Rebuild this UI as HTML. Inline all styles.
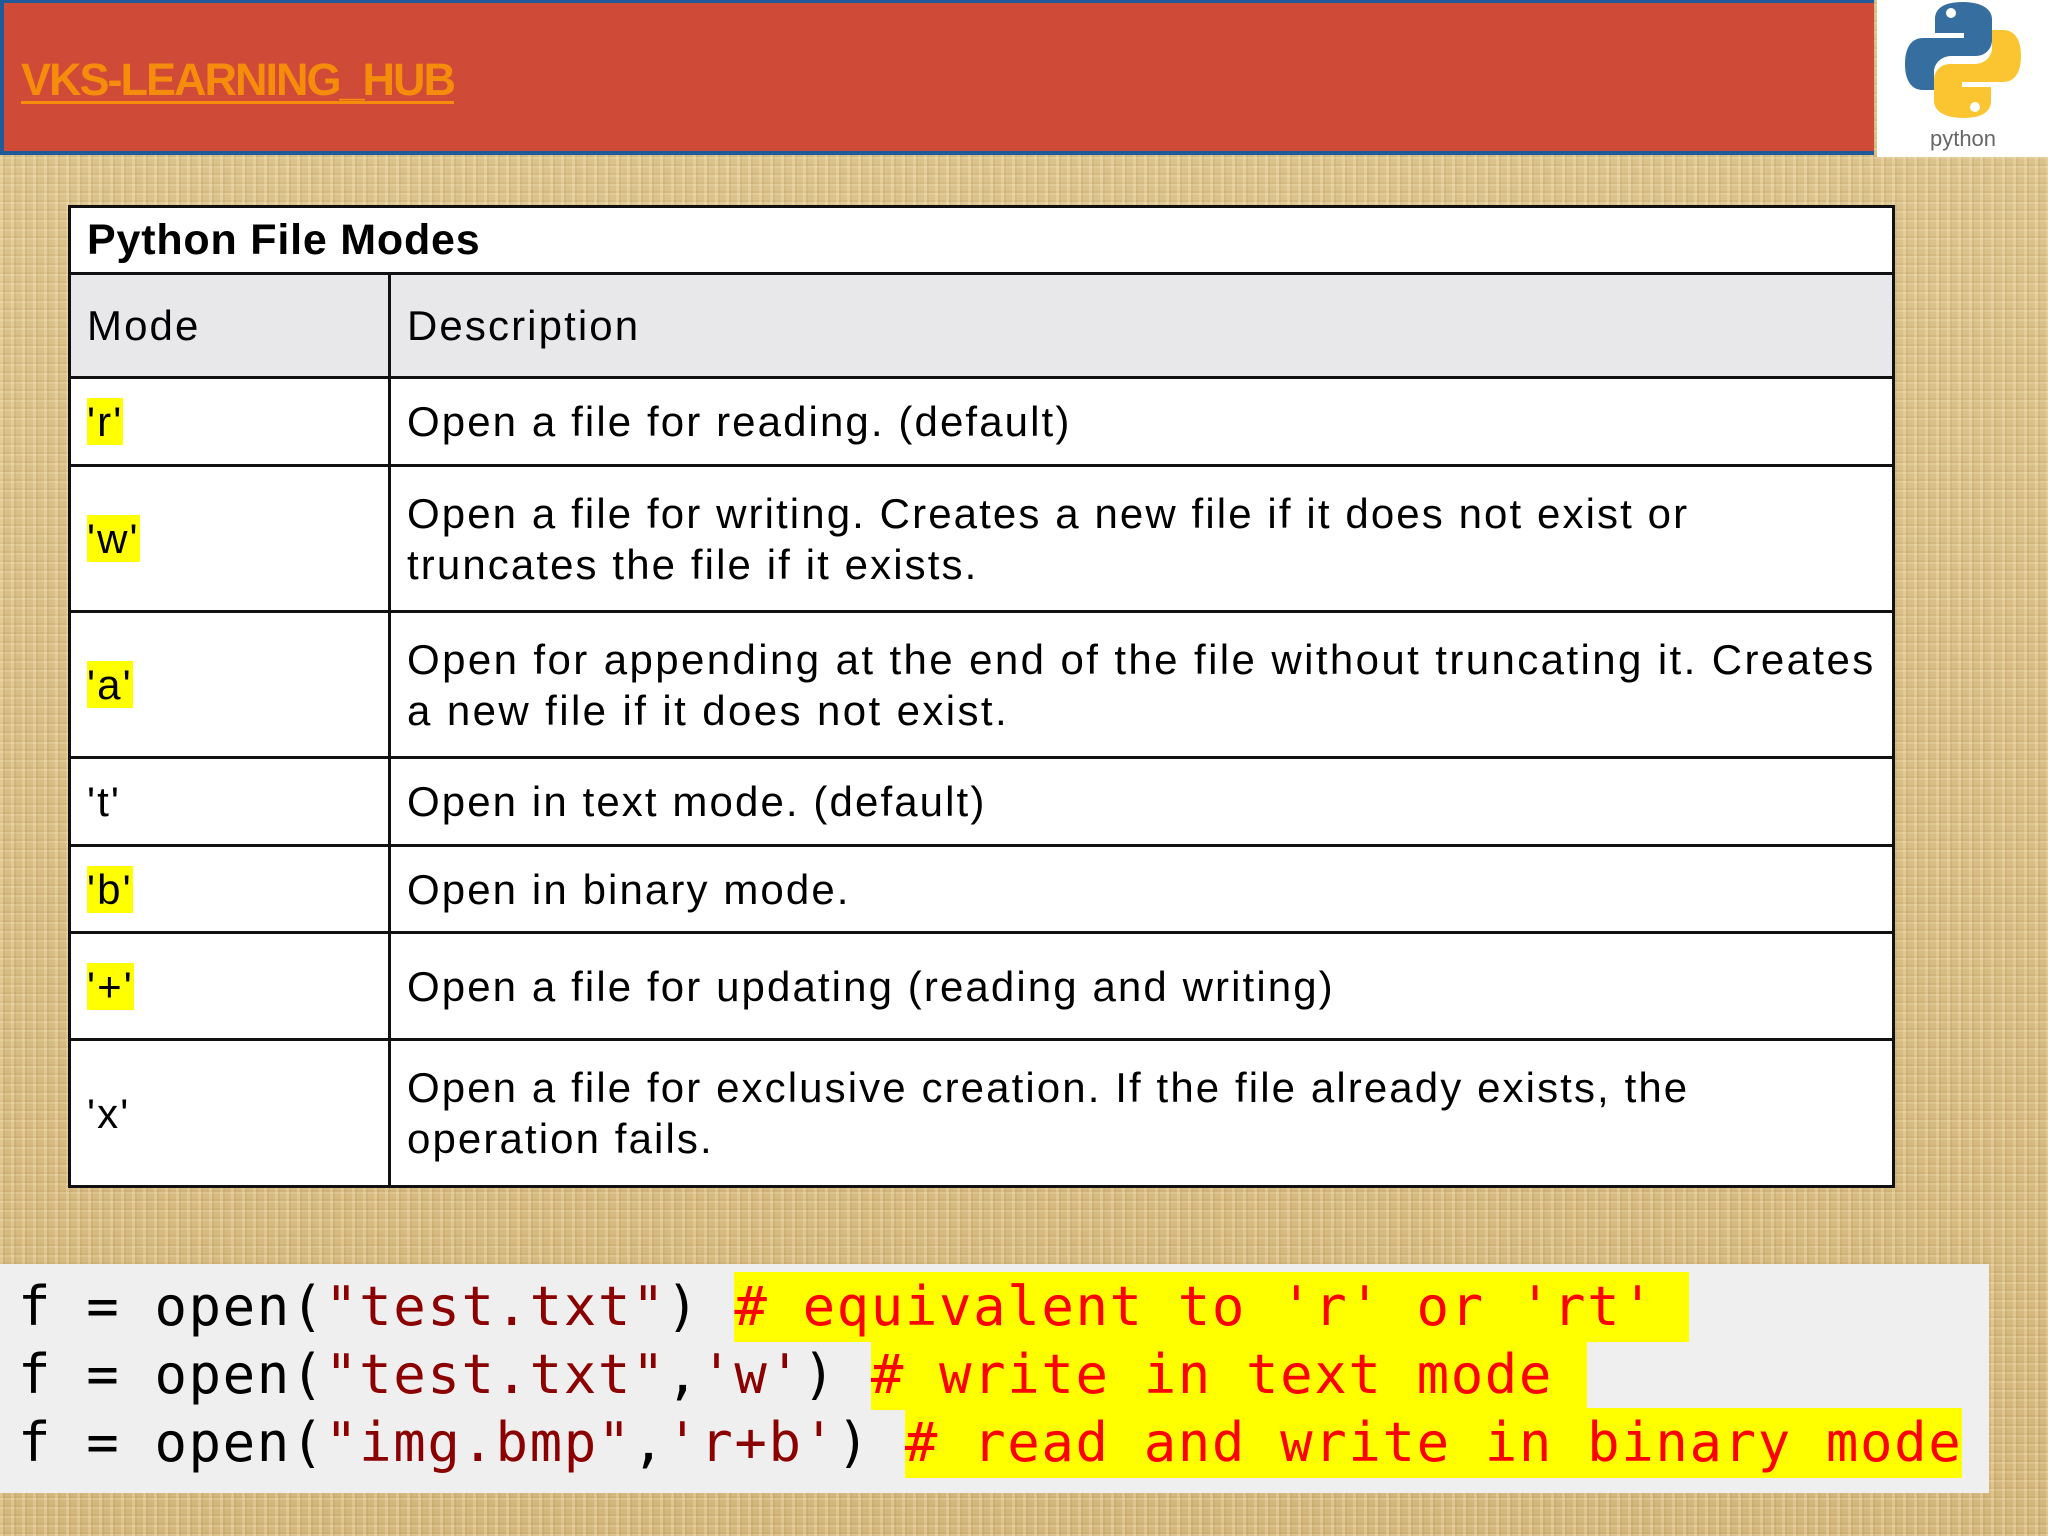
<!DOCTYPE html>
<html><head><meta charset="utf-8"><style>
html,body{margin:0;padding:0}
body{width:2048px;height:1536px;position:relative;overflow:hidden;
background:#d8bd84;
background-image:
repeating-linear-gradient(90deg,rgba(255,240,200,.25) 0 3px,rgba(160,120,60,.12) 3px 5px,rgba(255,240,200,0) 5px 11px),
repeating-linear-gradient(0deg,rgba(255,245,210,.18) 0 2px,rgba(150,110,50,.10) 2px 4px,rgba(0,0,0,0) 4px 9px),
linear-gradient(180deg,#dcc48e,#d4b77c);}
.hdr{position:absolute;left:0;top:0;width:1874px;height:155px;background:#cf4a37;border-left:4px solid #1f5b9b;border-bottom:4px solid #1f5b9b;border-top:3px solid #1f5b9b;box-sizing:border-box}
.ttl{position:absolute;left:21px;top:54px;font:bold 45px "Liberation Sans",sans-serif;color:#f68c0c;text-decoration:underline;text-decoration-thickness:3px;text-underline-offset:6px;letter-spacing:-2px}
.logo{position:absolute;left:1877px;top:0;width:171px;height:157px;background:#fff}
table{position:absolute;left:68px;top:205px;width:1827px;border-collapse:collapse;background:#fff;font-family:"Liberation Sans",sans-serif;font-size:42px;letter-spacing:2.1px;color:#000}
td{border:3px solid #111;padding:0 16px;vertical-align:middle;line-height:51px}
.hl{background:#ffff00}
.code{position:absolute;left:0;top:1264px;width:1989px;height:229px;background:#efefef;font-family:"DejaVu Sans Mono","Liberation Mono",monospace;font-size:54px;letter-spacing:1.6px}
.ln{position:absolute;left:18px;height:70px;line-height:70px;white-space:pre}
.s{color:#8b0000}.c{color:#f00;background:#ff0;display:inline-block}
</style></head><body>
<div class="hdr"></div>
<div class="ttl">VKS-LEARNING_HUB</div>
<div class="logo">
<svg width="171" height="157" viewBox="0 0 171 157">
<path d="M86 2c-20 0-28 7-28 17v14h29v5H46c-12 0-18 10-18 26s6 26 18 26h11V72c0-9 8-16 17-16h25c9 0 16-7 16-16V19c0-10-11-17-29-17z" fill="#366f9f"/>
<circle cx="74" cy="13" r="5" fill="#fff"/>
<path d="M86 118c20 0 28-7 28-17V87H85v-5h41c12 0 18-10 18-26s-6-26-18-26h-11v18c0 9-8 16-17 16H73c-9 0-16 7-16 16v21c0 10 11 17 29 17z" fill="#fbc531"/>
<circle cx="98" cy="107" r="5" fill="#fff"/>
<text x="86" y="146" text-anchor="middle" font-family="Liberation Sans,sans-serif" font-size="22" fill="#666">python</text>
</svg></div>
<table>
<tr style="height:67px"><td colspan="2" style="font-weight:bold;font-size:43px;letter-spacing:0.8px">Python File Modes</td></tr>
<tr style="height:104px;background:#e8e8ea"><td style="width:285px">Mode</td><td>Description</td></tr>
<tr style="height:88px"><td><span class="hl">'r'</span></td><td>Open a file for reading. (default)</td></tr>
<tr style="height:146px"><td><span class="hl">'w'</span></td><td>Open a file for writing. Creates a new file if it does not exist or<br>truncates the file if it exists.</td></tr>
<tr style="height:146px"><td><span class="hl">'a'</span></td><td style="letter-spacing:2.4px">Open for appending at the end of the file without truncating it. Creates<br>a new file if it does not exist.</td></tr>
<tr style="height:88px"><td>'t'</td><td>Open in text mode. (default)</td></tr>
<tr style="height:87px"><td><span class="hl">'b'</span></td><td>Open in binary mode.</td></tr>
<tr style="height:107px"><td><span class="hl">'+'</span></td><td>Open a file for updating (reading and writing)</td></tr>
<tr style="height:147px"><td>'x'</td><td>Open a file for exclusive creation. If the file already exists, the<br>operation fails.</td></tr>
</table>
<div class="code">
<div class="ln" style="top:8px">f = open(<span class="s">"test.txt"</span>) <span class="c"># equivalent to 'r' or 'rt' </span></div>
<div class="ln" style="top:76px">f = open(<span class="s">"test.txt"</span>,<span class="s">'w'</span>) <span class="c"># write in text mode </span></div>
<div class="ln" style="top:144px">f = open(<span class="s">"img.bmp"</span>,<span class="s">'r+b'</span>) <span class="c"># read and write in binary mode</span></div>
</div>
</body></html>
